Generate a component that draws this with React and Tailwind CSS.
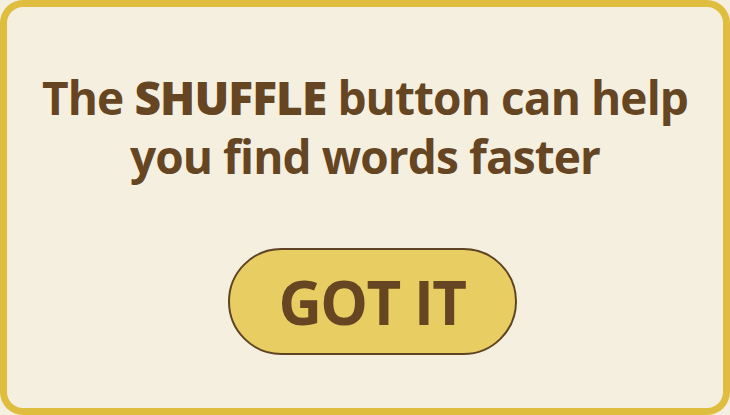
import React from "react";

export default function App() {
  return (
    <div className="w-[730px] h-[415px] bg-[#f5efe0]">
      <div
        className="h-full w-full rounded-[23px] bg-[#dfbd3f] p-[7px]"
        style={{ fontFamily: '"Open Sans", "Noto Sans", sans-serif' }}
      >
        <div className="h-full w-full rounded-[16px] bg-[#f5efe0] flex flex-col items-center">
          <h1 className="mt-[61px] text-center text-[46px] leading-[59px] font-bold text-[#654522] tracking-[-0.9px]">
            The <span className="font-extrabold">SHUFFLE</span> button can help
            <br />
            you find words faster
          </h1>
          <button className="mt-[62px] ml-[14px] w-[289px] h-[107px] rounded-full border-2 border-[#5f4424] bg-[#e8cd63] text-[#654522] text-[60px] font-bold leading-none tracking-[-1.5px]">
            GOT IT
          </button>
        </div>
      </div>
    </div>
  );
}
